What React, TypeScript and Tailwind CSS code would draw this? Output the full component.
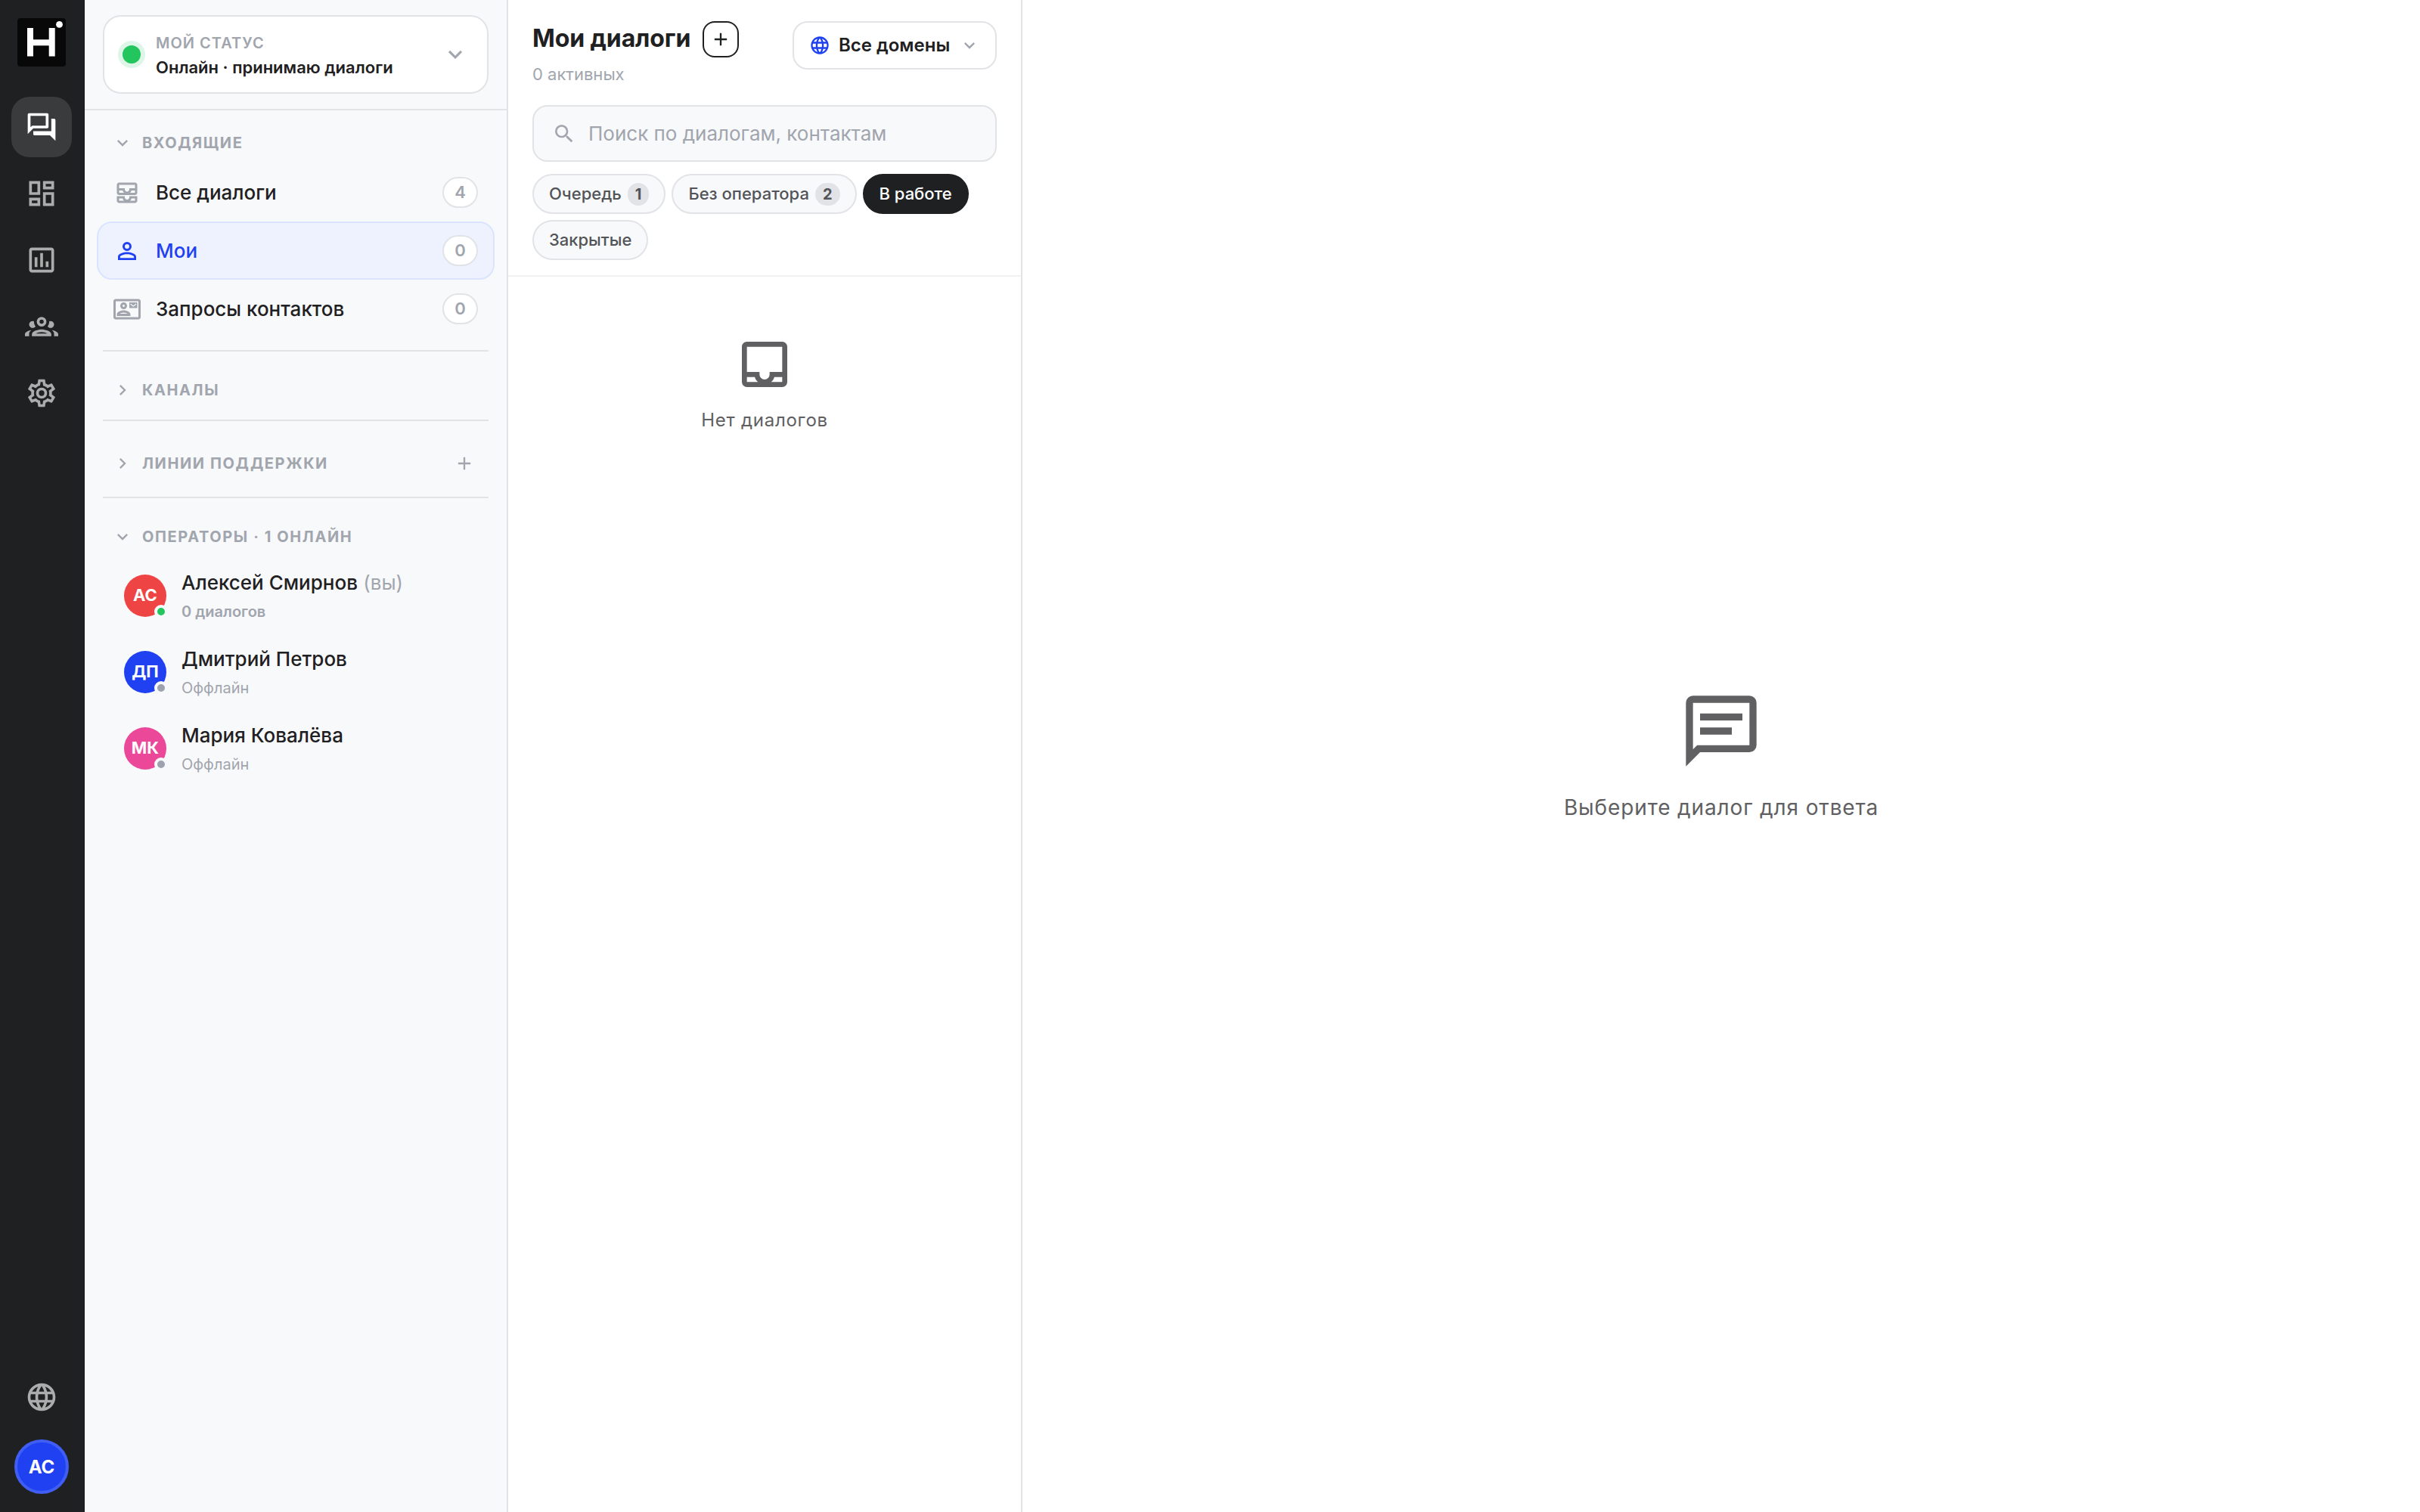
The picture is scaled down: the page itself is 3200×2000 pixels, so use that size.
import React, { useState } from 'react';
import { MdOutlineAllInbox, MdOutlineContactMail } from 'react-icons/md';

const icons = {
  forum:
    'M15,4V11H5.17L4,12.17V4H15M16,2H3A1,1 0 0,0 2,3V17L6,13H16A1,1 0 0,0 17,12V3A1,1 0 0,0 16,2M21,6H19V15H6V17A1,1 0 0,0 7,18H18L22,22V7A1,1 0 0,0 21,6Z',
  dashboard:
    'M19,5V7H15V5H19M9,5V11H5V5H9M19,13V19H15V13H19M9,17V19H5V17H9M21,3H13V9H21V3M11,3H3V13H11V3M21,11H13V21H21V11M11,15H3V21H11V15Z',
  chart:
    'M9 17H7V10H9V17M13 17H11V7H13V17M17 17H15V13H17V17M19 19H5V5H19V19.1M19 3H5C3.9 3 3 3.9 3 5V19C3 20.1 3.9 21 5 21H19C20.1 21 21 20.1 21 19V5C21 3.9 20.1 3 19 3Z',
  group:
    'M12,5A3.5,3.5 0 0,0 8.5,8.5A3.5,3.5 0 0,0 12,12A3.5,3.5 0 0,0 15.5,8.5A3.5,3.5 0 0,0 12,5M12,7A1.5,1.5 0 0,1 13.5,8.5A1.5,1.5 0 0,1 12,10A1.5,1.5 0 0,1 10.5,8.5A1.5,1.5 0 0,1 12,7M5.5,8A2.5,2.5 0 0,0 3,10.5C3,11.44 3.53,12.25 4.29,12.68C4.65,12.88 5.06,13 5.5,13C5.94,13 6.35,12.88 6.71,12.68C7.08,12.47 7.39,12.17 7.62,11.81C6.89,10.86 6.5,9.7 6.5,8.5C6.5,8.41 6.5,8.31 6.5,8.22C6.2,8.08 5.86,8 5.5,8M18.5,8C18.14,8 17.8,8.08 17.5,8.22C17.5,8.31 17.5,8.41 17.5,8.5C17.5,9.7 17.11,10.86 16.38,11.81C16.5,12 16.63,12.15 16.78,12.3C16.94,12.45 17.1,12.58 17.29,12.68C17.65,12.88 18.06,13 18.5,13C18.94,13 19.35,12.88 19.71,12.68C20.47,12.25 21,11.44 21,10.5A2.5,2.5 0 0,0 18.5,8M12,14C9.66,14 5,15.17 5,17.5V19H19V17.5C19,15.17 14.34,14 12,14M4.71,14.55C2.78,14.78 0,15.76 0,17.5V19H3V17.07C3,16.06 3.69,15.22 4.71,14.55M19.29,14.55C20.31,15.22 21,16.06 21,17.07V19H24V17.5C24,15.76 21.22,14.78 19.29,14.55M12,16C13.53,16 15.24,16.5 16.23,17H7.77C8.76,16.5 10.47,16 12,16Z',
  cog: 'M12,8A4,4 0 0,1 16,12A4,4 0 0,1 12,16A4,4 0 0,1 8,12A4,4 0 0,1 12,8M12,10A2,2 0 0,0 10,12A2,2 0 0,0 12,14A2,2 0 0,0 14,12A2,2 0 0,0 12,10M10,22C9.75,22 9.54,21.82 9.5,21.58L9.13,18.93C8.5,18.68 7.96,18.34 7.44,17.94L4.95,18.95C4.73,19.03 4.46,18.95 4.34,18.73L2.34,15.27C2.21,15.05 2.27,14.78 2.46,14.63L4.57,12.97L4.5,12L4.57,11L2.46,9.37C2.27,9.22 2.21,8.95 2.34,8.73L4.34,5.27C4.46,5.05 4.73,4.96 4.95,5.05L7.44,6.05C7.96,5.66 8.5,5.32 9.13,5.07L9.5,2.42C9.54,2.18 9.75,2 10,2H14C14.25,2 14.46,2.18 14.5,2.42L14.87,5.07C15.5,5.32 16.04,5.66 16.56,6.05L19.05,5.05C19.27,4.96 19.54,5.05 19.66,5.27L21.66,8.73C21.79,8.95 21.73,9.22 21.54,9.37L19.43,11L19.5,12L19.43,13L21.54,14.63C21.73,14.78 21.79,15.05 21.66,15.27L19.66,18.73C19.54,18.95 19.27,19.04 19.05,18.95L16.56,17.95C16.04,18.34 15.5,18.68 14.87,18.93L14.5,21.58C14.46,21.82 14.25,22 14,22H10M11.25,4L10.88,6.61C9.68,6.86 8.62,7.5 7.85,8.39L5.44,7.35L4.69,8.65L6.8,10.2C6.4,11.37 6.4,12.64 6.8,13.8L4.68,15.36L5.43,16.66L7.86,15.62C8.63,16.5 9.68,17.14 10.87,17.38L11.24,20H12.76L13.13,17.39C14.32,17.14 15.37,16.5 16.14,15.62L18.57,16.66L19.32,15.36L17.2,13.81C17.6,12.64 17.6,11.37 17.2,10.2L19.31,8.65L18.56,7.35L16.15,8.39C15.38,7.5 14.32,6.86 13.12,6.62L12.75,4H11.25Z',
  web: 'M16.36,14C16.44,13.34 16.5,12.68 16.5,12C16.5,11.32 16.44,10.66 16.36,10H19.74C19.9,10.64 20,11.31 20,12C20,12.69 19.9,13.36 19.74,14M14.59,19.56C15.19,18.45 15.65,17.25 15.97,16H18.92C17.96,17.65 16.43,18.93 14.59,19.56M14.34,14H9.66C9.56,13.34 9.5,12.68 9.5,12C9.5,11.32 9.56,10.65 9.66,10H14.34C14.43,10.65 14.5,11.32 14.5,12C14.5,12.68 14.43,13.34 14.34,14M12,19.96C11.17,18.76 10.5,17.43 10.09,16H13.91C13.5,17.43 12.83,18.76 12,19.96M8,8H5.08C6.03,6.34 7.57,5.06 9.4,4.44C8.8,5.55 8.35,6.75 8,8M5.08,16H8C8.35,17.25 8.8,18.45 9.4,19.56C7.57,18.93 6.03,17.65 5.08,16M4.26,14C4.1,13.36 4,12.69 4,12C4,11.31 4.1,10.64 4.26,10H7.64C7.56,10.66 7.5,11.32 7.5,12C7.5,12.68 7.56,13.34 7.64,14M12,4.03C12.83,5.23 13.5,6.57 13.91,8H10.09C10.5,6.57 11.17,5.23 12,4.03M18.92,8H15.97C15.65,6.75 15.19,5.55 14.59,4.44C16.43,5.07 17.96,6.34 18.92,8M12,2C6.47,2 2,6.5 2,12A10,10 0 0,0 12,22A10,10 0 0,0 22,12A10,10 0 0,0 12,2Z',
  account:
    'M12,4A4,4 0 0,1 16,8A4,4 0 0,1 12,12A4,4 0 0,1 8,8A4,4 0 0,1 12,4M12,6A2,2 0 0,0 10,8A2,2 0 0,0 12,10A2,2 0 0,0 14,8A2,2 0 0,0 12,6M12,13C14.67,13 20,14.33 20,17V20H4V17C4,14.33 9.33,13 12,13M12,14.9C9.03,14.9 5.9,16.36 5.9,17V18.1H18.1V17C18.1,16.36 14.97,14.9 12,14.9Z',
  chevronDown: 'M7.41,8.58L12,13.17L16.59,8.58L18,10L12,16L6,10L7.41,8.58Z',
  chevronRight: 'M8.59,16.58L13.17,12L8.59,7.41L10,6L16,12L10,18L8.59,16.58Z',
  plus: 'M19,13H13V19H11V13H5V11H11V5H13V11H19V13Z',
  magnify:
    'M9.5,3A6.5,6.5 0 0,1 16,9.5C16,11.11 15.41,12.59 14.44,13.73L14.71,14H15.5L20.5,19L19,20.5L14,15.5V14.71L13.73,14.44C12.59,15.41 11.11,16 9.5,16A6.5,6.5 0 0,1 3,9.5A6.5,6.5 0 0,1 9.5,3M9.5,5C7,5 5,7 5,9.5C5,12 7,14 9.5,14C12,14 14,12 14,9.5C14,7 12,5 9.5,5Z',
  inbox:
    'M19,3H5C3.89,3 3,3.9 3,5V19A2,2 0 0,0 5,21H19A2,2 0 0,0 21,19V5C21,3.9 20.1,3 19,3M19,19H14.6C15.2,18.47 15.66,17.78 15.87,17H19V19M19,15H14V16A2,2 0 0,1 10,16V15H5V5H19V15M5,17H8.13C8.34,17.78 8.8,18.47 9.4,19H5V17Z',
  message:
    'M20,2H4A2,2 0 0,0 2,4V22L6,18H20A2,2 0 0,0 22,16V4A2,2 0 0,0 20,2M20,16H5.17L4,17.17V4H20V16M6,7H18V9H6V7M6,11H15V13H6V11Z',
};

type IconName = keyof typeof icons;

function Icon({ name, className }: { name: IconName; className: string }) {
  return (
    <svg viewBox="0 0 24 24" fill="currentColor" className={`shrink-0 ${className}`}>
      <path d={icons[name]} />
    </svg>
  );
}

function Logo() {
  return (
    <svg viewBox="0 0 64 64" className="size-16">
      <rect width="64" height="64" rx="4" fill="#080808" />
      <rect x="13" y="13" width="8" height="37.5" fill="#fff" />
      <rect x="41.7" y="13" width="8" height="37.5" fill="#fff" />
      <rect x="13" y="28.3" width="36" height="8" fill="#fff" />
      <circle cx="55.5" cy="8.4" r="4.4" fill="#fff" />
    </svg>
  );
}

const railItems: IconName[] = ['forum', 'dashboard', 'chart', 'group', 'cog'];

function Rail() {
  return (
    <nav className="flex w-28 shrink-0 flex-col items-center border-r-2 border-[#1b1c1f] bg-[#1f2022] py-6">
      <Logo />
      <div className="mt-10 flex flex-col gap-2">
        {railItems.map((name, i) => (
          <button
            key={name}
            className={`flex size-20 items-center justify-center rounded-[24px] ${i === 0 ? 'bg-[#3a3b3c] text-white' : 'text-[#acacad]'}`}
          >
            <Icon name={name} className="-mt-px size-11" />
          </button>
        ))}
      </div>
      <button className="mt-auto flex size-20 items-center justify-center text-[#acacad]">
        <Icon name="web" className="-mt-px size-11" />
      </button>
      <div className="mt-4 flex size-[72px] items-center justify-center rounded-full border-4 border-[#415ef3] bg-[#1f41f1] pt-0.5 text-[24px] font-bold text-white">
        AC
      </div>
    </nav>
  );
}

interface SectionTitleProps {
  title: string;
  open?: boolean;
  action?: boolean;
  className: string;
}

function SectionTitle({ title, open, action, className }: SectionTitleProps) {
  return (
    <div className={`flex items-center pl-9 pr-[42px] text-[#a1a5ad] ${className}`}>
      <Icon name={open ? 'chevronDown' : 'chevronRight'} className="size-7" />
      <span className="ml-3 text-[20px] font-bold tracking-[1.6px]">{title}</span>
      {action && <Icon name="plus" className="ml-auto size-7" />}
    </div>
  );
}

interface NavRowProps {
  icon: React.ReactNode;
  label: string;
  count: number;
  active?: boolean;
}

function NavRow({ icon, label, count, active }: NavRowProps) {
  return (
    <div
      className={`mx-4 flex h-[77px] items-center rounded-[20px] border-2 px-5 ${
        active ? 'border-[#dbe4ff] bg-[#eef2ff] text-[#1f41f1]' : 'border-transparent text-[#1f2022]'
      }`}
    >
      <span className={active ? 'text-[#1f41f1]' : 'text-[#a1a5ad]'}>{icon}</span>
      <span className="ml-5 text-[26px] font-medium">{label}</span>
      <span className="ml-auto flex h-[41px] w-[47px] items-center justify-center rounded-full border-2 border-[#e2e3e7] bg-white text-[22px] font-semibold text-[#a1a5ad]">
        {count}
      </span>
    </div>
  );
}

const operators = [
  { name: 'Алексей Смирнов', initials: 'АС', color: 'bg-[#ef4444]', you: true, online: true, status: '0 диалогов' },
  { name: 'Дмитрий Петров', initials: 'ДП', color: 'bg-[#1f41f1]', you: false, online: false, status: 'Оффлайн' },
  { name: 'Мария Ковалёва', initials: 'МК', color: 'bg-[#ec4899]', you: false, online: false, status: 'Оффлайн' },
];

function Sidebar() {
  return (
    <aside className="flex w-[560px] shrink-0 flex-col border-r-2 border-[#e2e3e7] bg-[#f8f9fb]">
      <div className="border-b-2 border-[#e2e3e5] px-6 py-5">
        <div className="flex h-[104px] items-center rounded-[24px] border-2 border-[#e2e3e7] bg-white px-6">
          <span className="size-6 rounded-full bg-[#22c55e] shadow-[0_0_0_6px_rgba(34,197,94,0.15)]" />
          <div className="ml-5 flex flex-col pt-px">
            <span className="text-[20px] leading-[34px] font-semibold tracking-[1px] text-[#a1a5ad]">МОЙ СТАТУС</span>
            <span className="text-[22px] leading-[31px] font-semibold">Онлайн · принимаю диалоги</span>
          </div>
          <Icon name="chevronDown" className="ml-auto size-9 text-[#a1a5ad]" />
        </div>
      </div>

      <SectionTitle title="ВХОДЯЩИЕ" open className="mt-[15px] h-[55px]" />
      <NavRow icon={<MdOutlineAllInbox className="size-9" />} label="Все диалоги" count={4} />
      <NavRow icon={<Icon name="account" className="size-9" />} label="Мои" count={0} active />
      <NavRow icon={<MdOutlineContactMail className="size-9" />} label="Запросы контактов" count={0} />

      <hr className="mx-6 mt-4 border-t-2 border-[#e2e3e5]" />
      <SectionTitle title="КАНАЛЫ" className="mt-3 h-[78px]" />
      <hr className="mx-6 border-t-2 border-[#e2e3e5]" />
      <SectionTitle title="ЛИНИИ ПОДДЕРЖКИ" action className="mt-3 h-[88px]" />
      <hr className="mx-6 border-t-2 border-[#e2e3e5]" />
      <SectionTitle title="ОПЕРАТОРЫ · 1 ОНЛАЙН" open className="mt-3.5 h-[73px]" />

      <div className="flex flex-col gap-[17px] pl-[52px]">
        {operators.map((op) => (
          <div key={op.initials} className="flex h-[84px] items-center gap-5">
            <div
              className={`relative flex size-14 items-center justify-center rounded-full pb-0.5 text-[22px] font-bold text-white ${op.color}`}
            >
              {op.initials}
              <span
                className={`absolute -right-0.5 -bottom-0.5 size-[18px] rounded-full border-4 border-[#f8f9fb] ${
                  op.online ? 'bg-[#22c55e]' : 'bg-[#9ca3af]'
                }`}
              />
            </div>
            <div className="flex flex-col pt-1">
              <span className="text-[26px] leading-[38px] font-medium">
                {op.name}
                {op.you && <span className="font-normal text-[#a1a5ad]"> (вы)</span>}
              </span>
              <span className={`text-[20px] leading-[38px] text-[#a1a5ad] ${op.online ? 'font-semibold' : 'font-normal'}`}>
                {op.status}
              </span>
            </div>
          </div>
        ))}
      </div>
    </aside>
  );
}

const filters = [
  { id: 'queue', label: 'Очередь', count: 1 },
  { id: 'unassigned', label: 'Без оператора', count: 2 },
  { id: 'active', label: 'В работе' },
  { id: 'closed', label: 'Закрытые' },
];

function DialogList() {
  const [filter, setFilter] = useState('active');

  return (
    <section className="flex w-[680px] shrink-0 flex-col border-r-2 border-[#e2e3e7]">
      <header className="border-b-2 border-[#f1f2f4] px-8 pt-7 pb-5">
        <div className="flex items-start justify-between">
          <div>
            <div className="flex h-12 items-center gap-4">
              <h1 className="pb-0.5 text-[32px] leading-[46px] font-bold tracking-[-0.1px]">Мои диалоги</h1>
              <button className="flex size-12 items-center justify-center rounded-[16px] border-2 border-[#1f2022]">
                <Icon name="plus" className="size-7" />
              </button>
            </div>
            <p className="mt-2 text-[22px] leading-7 text-[#a1a5ad]">0 активных</p>
          </div>
          <button className="flex h-16 w-[270px] items-center rounded-[20px] border-2 border-[#e2e3e7] px-5">
            <Icon name="web" className="size-7 text-[#1f41f1]" />
            <span className="ml-[11px] text-[24px] font-semibold">Все домены</span>
            <Icon name="chevronDown" className="ml-auto size-7 text-[#a1a5ad]" />
          </button>
        </div>

        <div className="mt-[27px] flex h-[75px] items-center gap-4 rounded-[20px] border-2 border-[#e2e3e7] bg-[#f8f9fb] px-6">
          <Icon name="magnify" className="size-8 text-[#a1a5ad]" />
          <input
            placeholder="Поиск по диалогам, контактам"
            className="min-w-0 flex-1 bg-transparent text-[26px] outline-none placeholder:text-[#a1a5ad]"
          />
        </div>

        <div className="mt-4 flex flex-wrap gap-2">
          {filters.map((f) => (
            <button
              key={f.id}
              onClick={() => setFilter(f.id)}
              className={`flex h-[53px] items-center gap-2 rounded-full border-2 px-5 text-[22px] font-medium ${
                filter === f.id
                  ? 'border-[#1f2022] bg-[#1f2022] text-white'
                  : 'border-[#e2e3e7] bg-[#f8f9fb] text-[#525457]'
              }`}
            >
              {f.label}
              {f.count && (
                <span className="flex h-[30px] items-center rounded-full bg-[#e2e3e7] px-2.5 text-[20px] font-bold">
                  {f.count}
                </span>
              )}
            </button>
          ))}
        </div>
      </header>

      <div className="flex flex-col items-center pt-[76px] text-[#606062]">
        <Icon name="inbox" className="size-20" />
        <p className="mt-[17px] text-[24px] leading-[34px] tracking-[0.75px]">Нет диалогов</p>
      </div>
    </section>
  );
}

export default function App() {
  return (
    <div className="flex h-[2000px] w-[3200px] overflow-hidden bg-white font-['Inter',sans-serif] text-[#1f2022] antialiased">
      <Rail />
      <Sidebar />
      <DialogList />
      <main className="flex flex-1 flex-col items-center justify-center text-[#606062]">
        <Icon name="message" className="size-28" />
        <p className="mt-6 text-[28px] leading-[42px] tracking-[0.875px]">Выберите диалог для ответа</p>
      </main>
    </div>
  );
}
